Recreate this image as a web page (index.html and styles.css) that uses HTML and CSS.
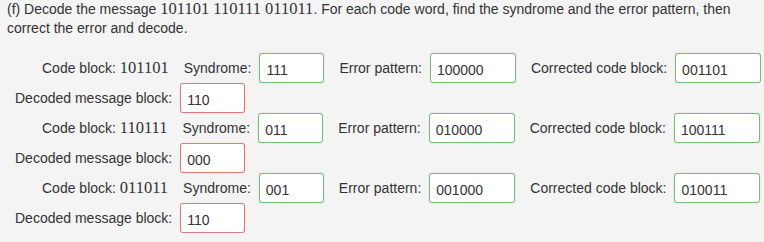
FILE: index.html
```html
<!DOCTYPE html>
<html lang="en">
<head>
    <meta charset="utf-8" />
    <title>Decode the message</title>
    <link rel="stylesheet" href="styles.css">
</head>
<body>
  <div id="question">
      <p class="prompt">(f) Decode the message <span class="num">101101 110111 011011</span>. For each code word, find the syndrome and the error pattern, then correct the error and decode.</p>

      <div class="block">
          <div class="row first-row">
              <span class="code">Code block: <span class="num">101101</span></span>
              <label class="field">Syndrome: <input class="answer short ok" value="111"></label>
              <label class="field">Error pattern: <input class="answer long ok" value="100000"></label>
              <label class="field">Corrected code block: <input class="answer long ok" value="001101"></label>
          </div>
          <div class="row second-row">
              <label class="field">Decoded message block: <input class="answer short bad" value="110"></label>
          </div>
      </div>

      <div class="block">
          <div class="row first-row">
              <span class="code">Code block: <span class="num">110111</span></span>
              <label class="field">Syndrome: <input class="answer short ok" value="011"></label>
              <label class="field">Error pattern: <input class="answer long ok" value="010000"></label>
              <label class="field">Corrected code block: <input class="answer long ok" value="100111"></label>
          </div>
          <div class="row second-row">
              <label class="field">Decoded message block: <input class="answer short bad" value="000"></label>
          </div>
      </div>

      <div class="block">
          <div class="row first-row">
              <span class="code">Code block: <span class="num">011011</span></span>
              <label class="field">Syndrome: <input class="answer short ok" value="001"></label>
              <label class="field">Error pattern: <input class="answer long ok" value="001000"></label>
              <label class="field">Corrected code block: <input class="answer long ok" value="010011"></label>
          </div>
          <div class="row second-row">
              <label class="field">Decoded message block: <input class="answer short bad" value="110"></label>
          </div>
      </div>
  </div>
</body>
</html>
```

FILE: styles.css
```css
body{
    margin: 0;
    background: #f4f4f4;
    font-family: Arial, "Liberation Sans", sans-serif;
    font-size: 14px;
    color: #333;
}

#question{
    padding: 0 7px;
}

.prompt{
    margin: 0 0 15px 0;
    line-height: 19px;
}

.num{
    font-family: "Times New Roman", "Liberation Serif", serif;
    font-size: 16.5px;
    line-height: 1;
}

.row{
    display: flex;
    align-items: center;
    gap: 15px;
    height: 30px;
}

.first-row{
    padding-left: 35px;
}

.second-row{
    padding-left: 8px;
}

.code{
    white-space: nowrap;
}

.field{
    display: flex;
    align-items: center;
    gap: 8px;
    white-space: nowrap;
}

.answer{
    box-sizing: border-box;
    height: 30px;
    padding: 3px 6px 0 6px;
    border-radius: 3px;
    background: #fff;
    font-family: Arial, "Liberation Sans", sans-serif;
    font-size: 14px;
    color: #333;
    outline: none;
}

.short{
    width: 65px;
}

.long{
    width: 86px;
}

.ok{
    border: 1px solid #7abd7a;
    box-shadow: 0 0 1px rgba(90, 170, 90, 0.5);
}

.bad{
    border: 1px solid #e07a7a;
    box-shadow: 0 0 1px rgba(210, 90, 90, 0.5);
}
```
